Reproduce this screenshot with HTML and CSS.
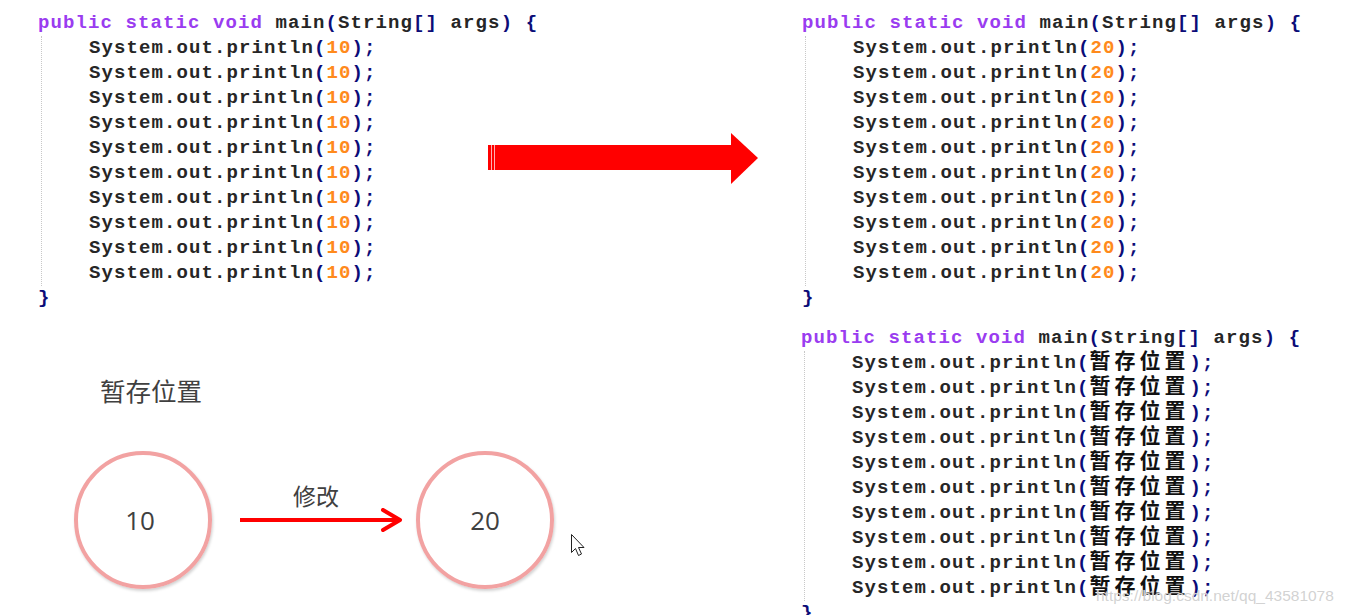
FILE: index.html
```html
<!DOCTYPE html>
<html>
<head>
  <meta charset="UTF-8">
  <title>暂存位置</title>
  <link rel="stylesheet" href="styles.css">
</head>
<body>
  <div class="page">
    <div class="left">
      <div class="top">
        <div class="code">
          <div class="line"><span class="kw">public static void</span> main<span class="op">(</span>String<span class="op">[]</span> args<span class="op">)</span> <span class="op">{</span></div>
          <div class="body">
            <div class="line">System.out.println<span class="op">(</span><span class="num">10</span><span class="op">);</span></div>
            <div class="line">System.out.println<span class="op">(</span><span class="num">10</span><span class="op">);</span></div>
            <div class="line">System.out.println<span class="op">(</span><span class="num">10</span><span class="op">);</span></div>
            <div class="line">System.out.println<span class="op">(</span><span class="num">10</span><span class="op">);</span></div>
            <div class="line">System.out.println<span class="op">(</span><span class="num">10</span><span class="op">);</span></div>
            <div class="line">System.out.println<span class="op">(</span><span class="num">10</span><span class="op">);</span></div>
            <div class="line">System.out.println<span class="op">(</span><span class="num">10</span><span class="op">);</span></div>
            <div class="line">System.out.println<span class="op">(</span><span class="num">10</span><span class="op">);</span></div>
            <div class="line">System.out.println<span class="op">(</span><span class="num">10</span><span class="op">);</span></div>
            <div class="line">System.out.println<span class="op">(</span><span class="num">10</span><span class="op">);</span></div>
          </div>
          <div class="line"><span class="op">}</span></div>
        </div>
        <svg class="big-arrow" width="272" height="52" viewBox="0 0 272 52">
          <rect x="0" y="12" width="245" height="25" fill="#ff0000"/>
          <rect x="3" y="12" width="1" height="25" fill="#ffb0b0"/>
          <rect x="6" y="12" width="1" height="25" fill="#ffb0b0"/>
          <polygon points="243,0 270,25 243,51" fill="#ff0000"/>
        </svg>
      </div>

      <div class="label">暂存位置</div>
      <div class="diagram">
        <div class="circle">10</div>
        <div class="change">
          <span class="change-text">修改</span>
          <svg width="164" height="24" viewBox="0 0 164 24">
            <line x1="0" y1="12" x2="160" y2="12" stroke="#ff0000" stroke-width="4"/>
            <polyline points="143,2 160,12 143,22" fill="none" stroke="#ff0000" stroke-width="4" stroke-linecap="round" stroke-linejoin="round"/>
          </svg>
        </div>
        <div class="circle">20</div>
      </div>
    </div>

    <div class="right">
      <div class="code">
        <div class="line"><span class="kw">public static void</span> main<span class="op">(</span>String<span class="op">[]</span> args<span class="op">)</span> <span class="op">{</span></div>
        <div class="body">
          <div class="line">System.out.println<span class="op">(</span><span class="num">20</span><span class="op">);</span></div>
          <div class="line">System.out.println<span class="op">(</span><span class="num">20</span><span class="op">);</span></div>
          <div class="line">System.out.println<span class="op">(</span><span class="num">20</span><span class="op">);</span></div>
          <div class="line">System.out.println<span class="op">(</span><span class="num">20</span><span class="op">);</span></div>
          <div class="line">System.out.println<span class="op">(</span><span class="num">20</span><span class="op">);</span></div>
          <div class="line">System.out.println<span class="op">(</span><span class="num">20</span><span class="op">);</span></div>
          <div class="line">System.out.println<span class="op">(</span><span class="num">20</span><span class="op">);</span></div>
          <div class="line">System.out.println<span class="op">(</span><span class="num">20</span><span class="op">);</span></div>
          <div class="line">System.out.println<span class="op">(</span><span class="num">20</span><span class="op">);</span></div>
          <div class="line">System.out.println<span class="op">(</span><span class="num">20</span><span class="op">);</span></div>
        </div>
        <div class="line"><span class="op">}</span></div>
      </div>

      <div class="code second">
        <div class="line"><span class="kw">public static void</span> main<span class="op">(</span>String<span class="op">[]</span> args<span class="op">)</span> <span class="op">{</span></div>
        <div class="body">
          <div class="line">System.out.println<span class="op">(</span><span class="cjk">暂存位置</span><span class="op">);</span></div>
          <div class="line">System.out.println<span class="op">(</span><span class="cjk">暂存位置</span><span class="op">);</span></div>
          <div class="line">System.out.println<span class="op">(</span><span class="cjk">暂存位置</span><span class="op">);</span></div>
          <div class="line">System.out.println<span class="op">(</span><span class="cjk">暂存位置</span><span class="op">);</span></div>
          <div class="line">System.out.println<span class="op">(</span><span class="cjk">暂存位置</span><span class="op">);</span></div>
          <div class="line">System.out.println<span class="op">(</span><span class="cjk">暂存位置</span><span class="op">);</span></div>
          <div class="line">System.out.println<span class="op">(</span><span class="cjk">暂存位置</span><span class="op">);</span></div>
          <div class="line">System.out.println<span class="op">(</span><span class="cjk">暂存位置</span><span class="op">);</span></div>
          <div class="line">System.out.println<span class="op">(</span><span class="cjk">暂存位置</span><span class="op">);</span></div>
          <div class="line">System.out.println<span class="op">(</span><span class="cjk">暂存位置</span><span class="op">);</span></div>
        </div>
        <div class="line"><span class="op">}</span></div>
      </div>
    </div>
  </div>

  <svg class="cursor" width="18" height="26" viewBox="0 0 18 26">
    <path d="M1.5 1.5 L1.5 19.5 L5.5 15.5 L8.5 22.5 L11.5 21 L8.5 14.5 L14 14.5 Z" fill="#fff" stroke="#222" stroke-width="1" stroke-linejoin="round"/>
  </svg>
  <div class="watermark">https://blog.csdn.net/qq_43581078</div>
</body>
</html>
```

FILE: styles.css
```css
html, body { margin: 0; background: #fff; }
body { width: 1350px; height: 615px; overflow: hidden; position: relative; }

.page { display: flex; }
.left { width: 801px; flex: 0 0 801px; }
.right { flex: 1; }

.top { display: grid; grid-template-columns: 488px auto; }
.big-arrow { display: block; margin-top: 133px; }

.code {
  font-family: "Liberation Mono", "Courier New", monospace;
  font-weight: bold;
  font-size: 19px;
  letter-spacing: 1.1px;
  line-height: 25px;
  color: #262626;
  padding-top: 11px;
}
.line { white-space: pre; height: 25px; }
.left .code { padding-left: 38px; }
.right .code { padding-left: 1px; }
.right .code.second { padding-top: 15px; padding-left: 0; }

.body {
  margin-left: 3px;
  padding-left: 47px;
  border-left: 1px dotted #c8c8c8;
}
.kw { color: #9a3cf0; }
.op { color: #0c0c78; }
.num { color: #ff8a1c; }
.cjk {
  font-family: "Noto Sans CJK SC", sans-serif;
  font-weight: bold;
  font-size: 21px;
  line-height: 0;
  letter-spacing: 4px;
  color: #111;
}

.label {
  font-family: "Noto Sans CJK SC", sans-serif;
  font-size: 25.5px;
  line-height: 32px;
  color: #404040;
  margin: 63px 0 0 100px;
}

.diagram {
  display: flex;
  align-items: center;
  margin-top: 45px;
  padding-left: 74px;
}
.circle {
  width: 130px;
  height: 130px;
  border: 4px solid #f2a2a2;
  border-radius: 50%;
  box-shadow: 1px 2px 3px rgba(0, 0, 0, 0.18);
  display: flex;
  align-items: center;
  justify-content: center;
  font-family: "Open Sans", sans-serif;
  font-size: 26px;
  color: #404040;
}
.circle:first-child { padding-right: 6px; width: 124px; }
.change {
  display: flex;
  flex-direction: column;
  align-items: center;
  margin: 0 12px 30px 28px;
  padding-top: 2px;
}
.change-text {
  font-family: "Noto Sans CJK SC", sans-serif;
  font-size: 23px;
  line-height: 30px;
  color: #404040;
  margin-right: 12px;
  margin-bottom: -2px;
}
.change svg { display: block; }

.cursor { position: absolute; left: 570px; top: 533px; }
.watermark {
  position: absolute;
  left: 1096px;
  top: 587px;
  font-family: "Liberation Sans", Arial, sans-serif;
  font-size: 15.5px;
  color: rgba(205, 205, 205, 0.9);
  text-shadow: 0 0 1px rgba(255, 255, 255, 0.8);
}
```
